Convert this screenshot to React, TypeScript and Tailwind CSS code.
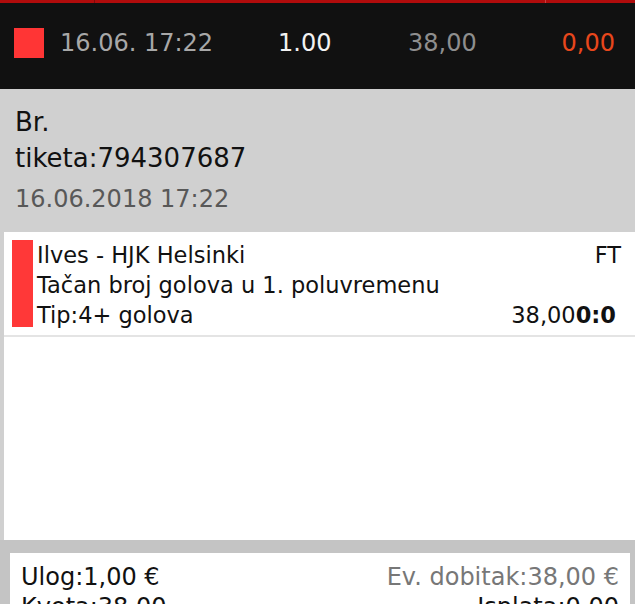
import React from "react";

export default function App() {
  return (
    <div className="w-[635px] h-[604px] overflow-hidden bg-[#d0d0d0] font-['DejaVu_Sans',sans-serif]">
      {/* Header */}
      <div className="h-[89px] bg-[#111111] flex flex-col">
        <div className="h-[3px] flex">
          <div className="w-[94px] bg-[#b00c0c]" />
          <div className="w-[1px] bg-[#7e0a0a]" />
          <div className="flex-1 bg-[#b00c0c]" />
          <div className="w-[1px] bg-[#c84040]" />
          <div className="w-[89px] bg-[#b00c0c]" />
        </div>
        <div className="flex-1 flex items-center pb-[6px]">
          <div className="ml-[14px] w-[30px] h-[30px] bg-[#ff3535]" />
          <span className="ml-[16px] w-[218px] text-[24px] text-[#a8a8a8]">16.06. 17:22</span>
          <span className="w-[130px] text-[24px] text-[#f2f2f2]">1.00</span>
          <span className="text-[24px] text-[#8e8e8e]">38,00</span>
          <span className="ml-auto mr-[20px] text-[24px] text-[#e8471c]">0,00</span>
        </div>
      </div>

      {/* Ticket info */}
      <div className="h-[143px] px-[15px] pt-[15px] bg-[#d0d0d0]">
        <div className="text-[26px] leading-[36px] text-[#111]">Br.</div>
        <div className="text-[26px] leading-[36px] text-[#111]">tiketa:794307687</div>
        <div className="mt-[5px] text-[24px] leading-[36px] text-[#585858]">16.06.2018 17:22</div>
      </div>

      {/* Events card */}
      <div className="ml-[4px] h-[308px] bg-white">
        <div className="flex pt-[8px] pb-[5px] border-b-2 border-[#e4e4e4]">
          <div className="ml-[8px] w-[21px] h-[87px] bg-[#ff3838] shrink-0" />
          <div className="ml-[4px] flex-1 text-[22.5px] leading-[30px] text-[#111]">
            <div className="flex justify-between pr-[14px]">
              <span>Ilves - HJK Helsinki</span>
              <span>FT</span>
            </div>
            <div>Tačan broj golova u 1. poluvremenu</div>
            <div className="flex justify-between pr-[19px]">
              <span>Tip:4+ golova</span>
              <span>
                38,00<b className="font-bold">0:0</b>
              </span>
            </div>
          </div>
        </div>
      </div>

      {/* Summary */}
      <div className="h-[64px] bg-[#c4c4c4] pt-[13px] pl-[10px] pr-[5px]">
        <div className="h-full bg-white px-[11px] pt-[9px] text-[24px] leading-[30px]">
          <div className="flex justify-between">
            <span className="text-[#111]">Ulog:1,00 €</span>
            <span className="text-[#777]">Ev. dobitak:38,00 €</span>
          </div>
          <div className="flex justify-between">
            <span className="text-[#111]">Kvota:38,00</span>
            <span className="text-[#111]">Isplata:0,00</span>
          </div>
        </div>
      </div>
    </div>
  );
}
